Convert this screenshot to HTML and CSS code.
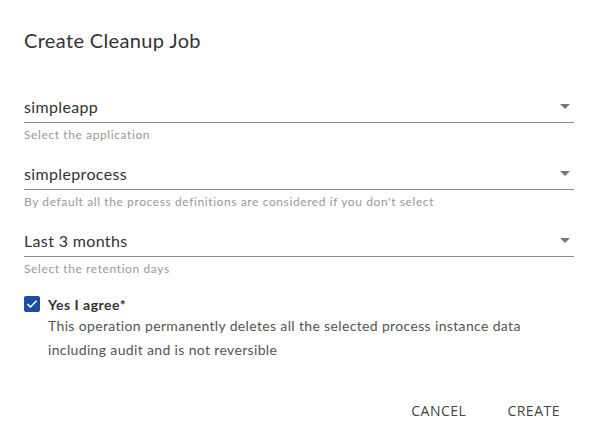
FILE: index.html
```html
<!DOCTYPE html>
<html>
<head>
<meta charset="utf-8">
<link rel="stylesheet" href="styles.css">
</head>
<body>
<div class="dialog">
  <h2 class="title">Create Cleanup Job</h2>
  <div class="form">
    <div class="field">
      <div class="select"><span class="value">simpleapp</span><span class="arrow"></span></div>
      <div class="hint">Select the application</div>
    </div>
    <div class="field">
      <div class="select"><span class="value">simpleprocess</span><span class="arrow"></span></div>
      <div class="hint">By default all the process definitions are considered if you don't select</div>
    </div>
    <div class="field">
      <div class="select"><span class="value">Last 3 months</span><span class="arrow"></span></div>
      <div class="hint">Select the retention days</div>
    </div>
    <div class="agree">
      <span class="checkbox"><svg width="16" height="16" viewBox="0 0 16 16"><path d="M3.5 8.2 L6.5 11 L12.5 4.8" fill="none" stroke="#fff" stroke-width="1.6"/></svg></span>
      <div class="agree-text">
        <div class="agree-label">Yes I agree*</div>
        <p class="agree-desc">This operation permanently deletes all the selected process instance data including audit and is not reversible</p>
      </div>
    </div>
  </div>
  <div class="actions">
    <button class="btn">CANCEL</button>
    <button class="btn">CREATE</button>
  </div>
</div>
</body>
</html>
```

FILE: styles.css
```css
html, body {
  margin: 0;
  padding: 0;
  background: #fff;
}
body {
  font-family: "Lato", "Noto Sans", sans-serif;
  color: #333;
}
.dialog {
  width: 600px;
  height: 445px;
  box-sizing: border-box;
  padding: 28px 26px 0 24px;
}
.title {
  margin: 0;
  font-size: 20px;
  font-weight: 400;
  color: #333;
  line-height: 24px;
  letter-spacing: 0.35px;
}
.form {
  margin-top: 38px;
  display: flex;
  flex-direction: column;
}
.field {
  margin-bottom: 15px;
}
.select {
  display: flex;
  align-items: center;
  justify-content: space-between;
  height: 32px;
  border-bottom: 1px solid #8a8a8a;
}
.value {
  font-size: 16px;
  color: #333;
  letter-spacing: 0.35px;
}
.arrow {
  width: 0;
  height: 0;
  border-left: 5px solid transparent;
  border-right: 5px solid transparent;
  border-top: 5px solid #777;
  margin-right: 4px;
}
.hint {
  font-size: 12px;
  color: #999;
  line-height: 14px;
  margin-top: 5px;
  letter-spacing: 0.6px;
}
.agree {
  display: flex;
  gap: 8px;
  margin-top: 5px;
}
.checkbox {
  width: 16px;
  height: 16px;
  background: #1f4c9e;
  border-radius: 2px;
  flex: none;
  margin-top: 0;
}
.checkbox svg { display: block; }
.agree-label {
  font-size: 14px;
  font-weight: 700;
  color: #333;
  line-height: 18px;
  letter-spacing: 0.5px;
}
.agree-desc {
  margin: 0;
  font-size: 14px;
  line-height: 24px;
  color: #555;
  letter-spacing: 0.35px;
}
.actions {
  display: flex;
  justify-content: flex-end;
  gap: 13px;
  margin-top: 31px;
}
.btn {
  font-family: "Open Sans", "Liberation Sans", sans-serif;
  font-size: 14px;
  color: #444;
  background: none;
  border: none;
  padding: 8px 14px;
  letter-spacing: 0.5px;
}
```
